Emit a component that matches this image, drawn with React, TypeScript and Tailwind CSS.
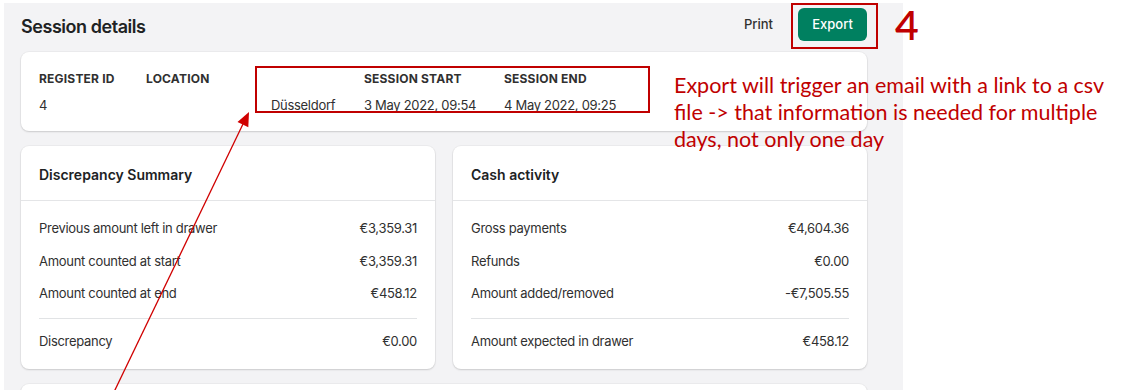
const rowsLeft = [
  ["Previous amount left in drawer", "€3,359.31"],
  ["Amount counted at start", "€3,359.31"],
  ["Amount counted at end", "€458.12"],
];

const rowsRight = [
  ["Gross payments", "€4,604.36"],
  ["Refunds", "€0.00"],
  ["Amount added/removed", "-€7,505.55"],
];

function SummaryCard({
  title,
  rows,
  total,
}: {
  title: string;
  rows: string[][];
  total: string[];
}) {
  return (
    <div className="w-[414px] h-[223px] bg-white rounded-[8px] shadow-[0_0_0_1px_rgba(0,0,0,0.03),0_1px_2px_rgba(0,0,0,0.14)]">
      <div className="h-[55px] flex items-center px-[18px] border-b border-[#e4e5e7]">
        <h2 className="text-[14px] font-semibold text-[#202223] mt-[2px]">{title}</h2>
      </div>
      <div className="px-[18px] pt-[18px]">
        <div className="flex flex-col gap-[12.5px]">
          {rows.map(([label, value]) => (
            <div key={label} className="flex justify-between h-[20px] items-center text-[13px] tracking-[-0.3px] text-[#303030]">
              <span>{label}</span>
              <span>{value}</span>
            </div>
          ))}
        </div>
        <div className="border-t border-[#e1e3e5] mt-[14px] mb-[13px]" />
        <div className="flex justify-between h-[20px] items-center text-[13px] tracking-[-0.3px] text-[#303030]">
          <span>{total[0]}</span>
          <span>{total[1]}</span>
        </div>
      </div>
    </div>
  );
}

export default function App() {
  return (
    <div
      className="relative w-[1134px] h-[390px] bg-white overflow-hidden"
      style={{ fontFamily: "Inter, 'Noto Sans', sans-serif" }}
    >
      <div className="pl-[4px] pt-[3px]">
        <div className="w-[899px] h-[400px] bg-[#f3f3f5] pl-[17px] pr-[36px]">
          {/* header */}
          <div className="flex items-center justify-between pt-[5px] h-[38px]">
            <h1 className="text-[18px] font-semibold tracking-[-0.45px] text-[#202223] mt-[4px]">Session details</h1>
            <div className="flex items-center gap-[25px]">
              <span className="text-[13px] font-medium text-[#303030]">Print</span>
              <button className="w-[69px] h-[33px] rounded-[6px] bg-[#008060] text-white text-[13px] font-medium">
                Export
              </button>
            </div>
          </div>

          {/* register card */}
          <div className="mt-[11px] h-[79px] bg-white rounded-[8px] shadow-[0_0_0_1px_rgba(0,0,0,0.03),0_1px_2px_rgba(0,0,0,0.14)] px-[18px] pt-[19px]">
            <div className="flex text-[12px] font-bold text-[#303030] h-[16px] items-center tracking-[0.2px]">
              <span className="w-[107px]">REGISTER ID</span>
              <span className="w-[218px]">LOCATION</span>
              <span className="w-[140px]">SESSION START</span>
              <span>SESSION END</span>
            </div>
            <div className="flex text-[13px] tracking-[-0.3px] text-[#303030] h-[20px] items-center mt-[9px]">
              <span className="w-[232px]">4</span>
              <span className="w-[93px]">Düsseldorf</span>
              <span className="w-[140px]">3 May 2022, 09:54</span>
              <span>4 May 2022, 09:25</span>
            </div>
          </div>

          {/* summary cards */}
          <div className="flex gap-[18px] mt-[15px]">
            <SummaryCard title="Discrepancy Summary" rows={rowsLeft} total={["Discrepancy", "€0.00"]} />
            <SummaryCard title="Cash activity" rows={rowsRight} total={["Amount expected in drawer", "€458.12"]} />
          </div>

          <div className="mt-[15px] h-[60px] bg-white rounded-[8px] shadow-[0_0_0_1px_rgba(0,0,0,0.03),0_1px_2px_rgba(0,0,0,0.14)]" />
        </div>
      </div>

      {/* annotation overlays */}
      <div className="absolute left-[791px] top-[3px] w-[87px] h-[46px] border-2 border-[#c00000]" />
      <div className="absolute left-[255px] top-[66px] w-[395px] h-[47px] border-2 border-[#c00000]" />
      <div
        className="absolute left-[895px] top-[0px] text-[41px] font-semibold leading-[50px] text-[#c00000]"
        style={{ fontFamily: "Lato, sans-serif" }}
      >
        4
      </div>
      <div
        className="absolute left-[674px] top-[72px] text-[21.5px] leading-[27px] text-[#c00000] w-[460px]"
        style={{ fontFamily: "Lato, sans-serif" }}
      >
        Export will trigger an email with a link to a csv
        <br />
        file -&gt; that information is needed for multiple
        <br />
        days, not only one day
      </div>
      <svg className="absolute left-0 top-0" width="1134" height="390">
        <line x1="114" y1="392" x2="243" y2="124" stroke="#d00000" strokeWidth="1.3" />
        <polygon points="249,112 248.3,127.2 237.5,122" fill="#d00000" />
      </svg>
    </div>
  );
}
